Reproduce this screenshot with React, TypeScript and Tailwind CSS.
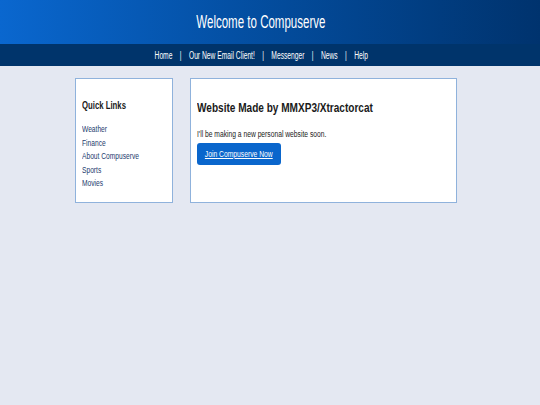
const NAV = ["Home", "Our New Email Client!", "Messenger", "News", "Help"];
const LINKS = ["Weather", "Finance", "About Compuserve", "Sports", "Movies"];

export default function App() {
  return (
    <div
      className="min-h-[405px] bg-[#e4e8f2] text-[#1a1a1a]"
      style={{ fontFamily: '"Liberation Sans", Arial, sans-serif' }}
    >
      <header className="flex h-[44px] items-center justify-center bg-gradient-to-r from-[#0a67cf] to-[#00336e] pr-[18px] text-white">
        <h1 className="w-max origin-center scale-x-[0.64] whitespace-nowrap text-[18px] leading-none">
          Welcome to Compuserve
        </h1>
      </header>
      <nav className="flex h-[22px] items-center justify-center bg-[#00346b] pr-[18px] text-[10px] text-white">
        <div className="flex origin-center scale-x-[0.67] items-center whitespace-nowrap">
          {NAV.map((item, i) => (
            <span key={item} className="flex items-center">
              {i > 0 && <span className="px-[11px]">|</span>}
              <a href="#">{item}</a>
            </span>
          ))}
        </div>
      </nav>

      <div className="flex gap-[17px] pl-[75px] pt-[12px]">
        {/* Sidebar */}
        <aside className="h-[125px] w-[98px] border border-[#8fb2dc] bg-white px-[6px] pt-[21px]">
          <h2 className="w-max origin-left scale-x-[0.705] whitespace-nowrap text-[11px] font-bold leading-none">
            Quick Links
          </h2>
          <ul className="mt-[11px] flex flex-col text-[9.5px] leading-[13.6px] text-[#1d3b6e]">
            {LINKS.map((l) => (
              <li key={l} className="w-max origin-left scale-x-[0.7] whitespace-nowrap">
                <a href="#">{l}</a>
              </li>
            ))}
          </ul>
        </aside>

        {/* Main */}
        <main className="h-[125px] w-[267px] border border-[#8fb2dc] bg-white px-[6px] pt-[22px]">
          <h2 className="w-max origin-left scale-x-[0.745] whitespace-nowrap text-[13.5px] font-bold leading-none">
            Website Made by MMXP3/Xtractorcat
          </h2>
          <p className="mt-[15px] w-max origin-left scale-x-[0.79] whitespace-nowrap text-[8.5px] leading-none">
            I'll be making a new personal website soon.
          </p>
          <a
            href="#"
            className="mt-[5px] flex h-[22px] w-[84px] items-center justify-center rounded-[3px] bg-[#0a66cc] text-[9.5px] leading-none text-white"
          >
            <span className="w-max origin-center scale-x-[0.71] whitespace-nowrap underline">
              Join Compuserve Now
            </span>
          </a>
        </main>
      </div>
    </div>
  );
}
